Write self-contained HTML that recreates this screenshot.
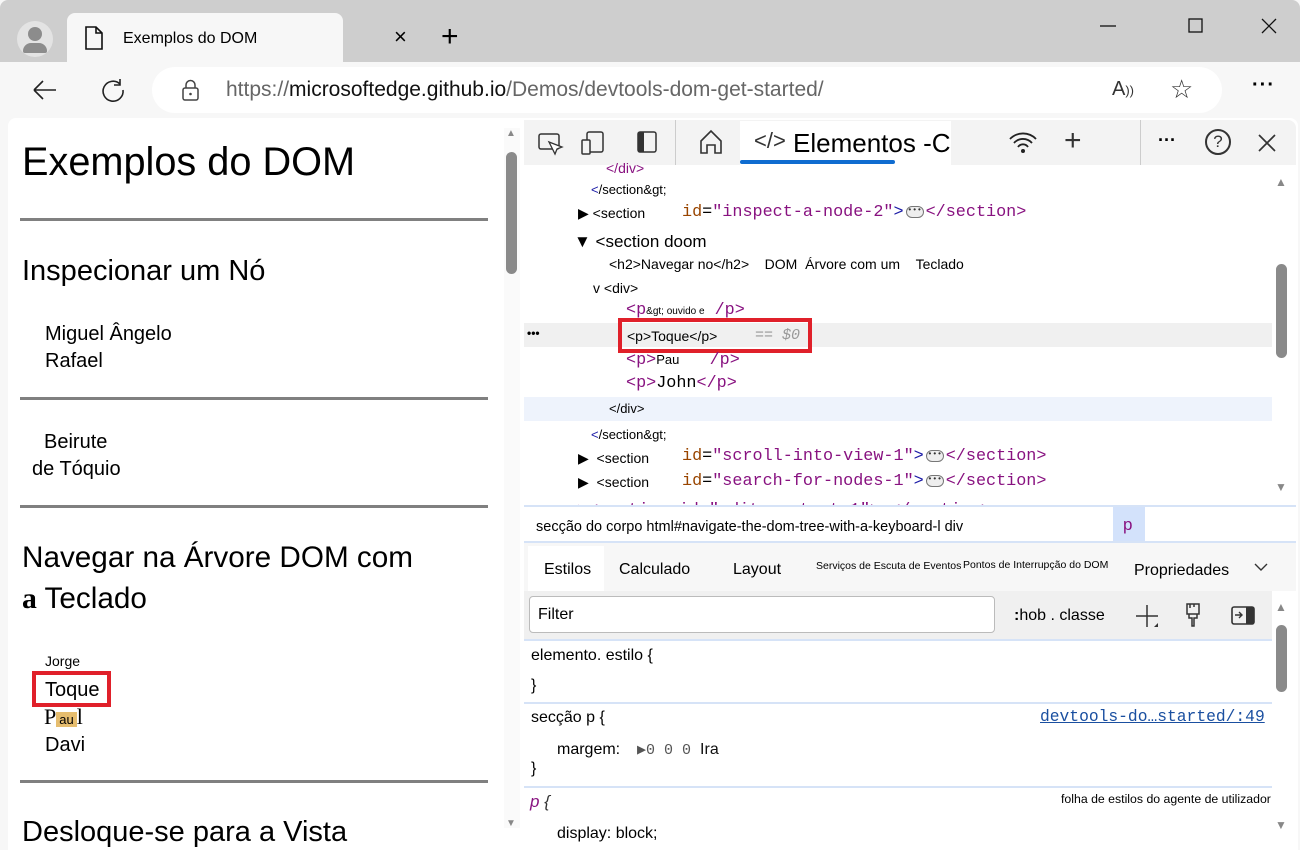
<!DOCTYPE html>
<html><head><meta charset="utf-8"><style>
*{margin:0;padding:0;box-sizing:border-box}
body{width:1300px;height:850px;background:#f7f7f7;font-family:"Liberation Sans",sans-serif;position:relative;overflow:hidden;color:#000}
.a{position:absolute;white-space:nowrap}
.m{font-family:"Liberation Mono",monospace}
.tag{color:#881280}.at{color:#994500}.av{color:#1a1aa6}
.hr{position:absolute;left:20px;width:468px;height:3px;background:#808080}
.ell{display:inline-block;width:18px;height:12px;border:1px solid #777;border-radius:6px;background:#eee;font-size:8px;line-height:8px;text-align:center;vertical-align:middle;color:#333;margin:0 2px}
</style></head><body>
<div class="a" style="left:0;top:0;width:1300px;height:62px;background:#cecece;border-radius:8px 8px 0 0"></div>
<div class="a" style="left:17px;top:21px;width:36px;height:36px;border-radius:50%;background:#e3e3e3"></div>
<div class="a" style="left:28px;top:27px;width:14px;height:14px;border-radius:50%;background:#8c8c8c"></div>
<div class="a" style="left:23px;top:43px;width:24px;height:10px;border-radius:12px 12px 3px 3px;background:#8c8c8c"></div>
<div class="a" style="left:67px;top:13px;width:276px;height:50px;background:#f7f7f7;border-radius:8px 8px 0 0"></div>
<svg class="a" style="left:84px;top:25px" width="20" height="26"><path d="M2 2h10l6 6v16H2z M12 2v6h6" fill="none" stroke="#111" stroke-width="1.6"/></svg>
<div class="a" style="left:123px;top:30px;font-size:16px">Exemplos do DOM</div>
<div class="a" style="left:394px;top:24px;font-size:22px">×</div>
<div class="a" style="left:441px;top:20px;font-size:30px;font-weight:300">+</div>
<svg class="a" style="left:1088px;top:14px" width="200" height="24"><path d="M12 12h16" stroke="#111" stroke-width="1.3"/><rect x="101" y="5" width="13" height="13" fill="none" stroke="#111" stroke-width="1.3"/><path d="M174 5l14 14M188 5l-14 14" stroke="#111" stroke-width="1.3"/></svg>
<svg class="a" style="left:30px;top:78px" width="100" height="26"><path d="M4 12h22M4 12l9-9M4 12l9 9" fill="none" stroke="#222" stroke-width="1.6"/><path d="M90 6a10 10 0 1 0 3 6M90 1v6h-6" fill="none" stroke="#222" stroke-width="1.6"/></svg>
<div class="a" style="left:152px;top:67px;width:1070px;height:46px;background:#fff;border-radius:23px"></div>
<svg class="a" style="left:181px;top:79px" width="20" height="22"><rect x="2" y="9" width="15" height="12" rx="2" fill="none" stroke="#444" stroke-width="1.5"/><path d="M5 9V6a4.5 4.5 0 0 1 9 0v3" fill="none" stroke="#444" stroke-width="1.5"/><circle cx="9.5" cy="15" r="1.3" fill="#444"/></svg>
<div class="a" style="left:226px;top:78px;font-size:21px;color:#666">https://<span style="color:#111">microsoftedge.github.io</span>/Demos/devtools-dom-get-started/</div>
<div class="a" style="left:1112px;top:78px;font-size:20px;color:#333">A<span style="font-size:13px">))</span></div>
<div class="a" style="left:1170px;top:74px;font-size:26px;color:#333">☆</div>
<div class="a" style="left:1252px;top:74px;font-size:20px;font-weight:bold;letter-spacing:1px">···</div>
<div class="a" style="left:8px;top:118px;width:514px;height:732px;background:#fff;border-radius:8px 0 0 0"></div>
<div class="a" style="left:504px;top:128px;width:16px;height:700px;background:#fafafa"></div>
<div class="a" style="left:506px;top:152px;width:11px;height:122px;background:#8a8a8a;border-radius:6px"></div>
<div class="a" style="left:506px;top:128px;font-size:10px;color:#888">▲</div>
<div class="a" style="left:506px;top:818px;font-size:10px;color:#888">▼</div>
<div class="a" style="left:22px;top:140px;font-size:39.7px">Exemplos do DOM</div>
<div class="hr" style="top:218px"></div>
<div class="a" style="left:22px;top:255px;font-size:29px">Inspecionar um Nó</div>
<div class="a" style="left:45px;top:323px;font-size:20px">Miguel Ângelo</div>
<div class="a" style="left:45px;top:350px;font-size:20px">Rafael</div>
<div class="hr" style="top:397px"></div>
<div class="a" style="left:44px;top:431px;font-size:20px">Beirute</div>
<div class="a" style="left:32px;top:458px;font-size:20px">de Tóquio</div>
<div class="hr" style="top:505px"></div>
<div class="a" style="left:22px;top:541px;font-size:29.7px">Navegar na Árvore DOM com</div>
<div class="a" style="left:22px;top:582px;font-size:29.7px"><b style="font-family:'Liberation Serif',serif">a</b> Teclado</div>
<div class="a" style="left:45px;top:653px;font-size:14px">Jorge</div>
<div class="a" style="left:32px;top:671px;width:79px;height:36px;border:4px solid #e0202a"></div>
<div class="a" style="left:45px;top:679px;font-size:20px">Toque</div>
<div class="a" style="left:44px;top:704px;font-size:22px;font-family:'Liberation Serif',serif">P<span style="font-family:'Liberation Sans';font-size:13px;background:#e6bd6e;padding:0 3px">au</span>l</div>
<div class="a" style="left:45px;top:734px;font-size:20px">Davi</div>
<div class="hr" style="top:780px"></div>
<div class="a" style="left:22px;top:816px;font-size:29px">Desloque-se para a Vista</div>
<div class="a" style="left:522px;top:118px;width:776px;height:732px;background:#fff;border-radius:0 8px 0 0"></div>
<div class="a" style="left:524px;top:120px;width:772px;height:45px;background:#f3f3f3;border-radius:0 8px 0 0"></div>
<svg class="a" style="left:535px;top:128px" width="130" height="30"><rect x="4" y="6" width="20" height="15" rx="2" fill="none" stroke="#333" stroke-width="1.5"/><path d="M14 14l6 12 2-5 5-2z" fill="#fff" stroke="#333" stroke-width="1.3"/><rect x="52" y="4" width="16" height="20" rx="2" fill="none" stroke="#333" stroke-width="1.5"/><rect x="47" y="12" width="8" height="14" rx="1" fill="#f3f3f3" stroke="#333" stroke-width="1.5"/><rect x="103" y="4" width="18" height="20" rx="2" fill="none" stroke="#333" stroke-width="1.5"/><rect x="103" y="4" width="6" height="20" fill="#333"/></svg>
<div class="a" style="left:675px;top:120px;width:1px;height:45px;background:#ccc"></div>
<svg class="a" style="left:698px;top:128px" width="26" height="28"><path d="M3 13L13 3l10 10v12h-6v-8h-8v8H3z" fill="none" stroke="#333" stroke-width="1.6"/></svg>
<div class="a" style="left:740px;top:121px;width:211px;height:44px;background:#fff"></div>
<div class="a" style="left:740px;top:160px;width:155px;height:4px;background:#0f6cd0;border-radius:2px"></div>
<div class="a" style="left:754px;top:128px;font-size:22px;color:#333">&lt;/&gt;</div>
<div class="a" style="left:793px;top:128px;font-size:26px">Elementos -C</div>
<svg class="a" style="left:1008px;top:131px" width="30" height="24"><path d="M2 8a18 18 0 0 1 26 0M6 12a12 12 0 0 1 18 0M10 16a6 6 0 0 1 10 0" fill="none" stroke="#222" stroke-width="1.8"/><circle cx="15" cy="20" r="2" fill="#222"/></svg>
<div class="a" style="left:1064px;top:124px;font-size:30px;font-weight:300;color:#333">+</div>
<div class="a" style="left:1140px;top:120px;width:1px;height:45px;background:#ccc"></div>
<div class="a" style="left:1158px;top:130px;font-size:18px;font-weight:bold">···</div>
<div class="a" style="left:1205px;top:129px;width:26px;height:26px;border:2px solid #333;border-radius:50%;font-size:17px;text-align:center;line-height:22px;color:#333">?</div>
<svg class="a" style="left:1257px;top:133px" width="20" height="20"><path d="M2 2l16 16M18 2L2 18" stroke="#333" stroke-width="1.7"/></svg>
<div class="a" style="left:524px;top:323px;width:748px;height:24px;background:#f0f0f0"></div>
<div class="a" style="left:524px;top:397px;width:748px;height:24px;background:#eef3fc"></div>
<div class="a" style="left:606px;top:160px;font-size:14px;color:#881280">&lt;/div&gt;</div>
<div class="a" style="left:591px;top:182px;font-size:13px"><span class="av">&lt;</span>/section&amp;gt;</div>
<div class="a" style="left:578px;top:205px;font-size:14px">▶ <span style="font-size:14px">&lt;section</span></div>
<div class="a m" style="left:682px;top:203px;font-size:16.8px"><span class="at">id</span>=<span class="tag">"inspect-a-node-2"</span><span class="av">&gt;</span><span class="ell">•••</span><span class="tag">&lt;/section&gt;</span></div>
<div class="a" style="left:574px;top:232px;font-size:17px">▼ &lt;section doom</div>
<div class="a" style="left:609px;top:256px;font-size:14px">&lt;h2&gt;Navegar no&lt;/h2&gt; &nbsp; &nbsp;DOM &nbsp;Árvore com um &nbsp; &nbsp;Teclado</div>
<div class="a" style="left:593px;top:280px;font-size:14px">v &lt;div&gt;</div>
<div class="a m" style="left:626px;top:301px;font-size:16.8px"><span class="tag">&lt;p</span><span style="font-family:'Liberation Sans';font-size:10px">&amp;gt; ouvido e</span> <span class="tag">/p&gt;</span></div>
<div class="a" style="left:527px;top:326px;font-size:12px;font-weight:bold">•••</div>
<div class="a" style="left:618px;top:318px;width:194px;height:35px;border:4px solid #e0202a"></div>
<div class="a" style="left:627px;top:328px;font-size:14px">&lt;p&gt;Toque&lt;/p&gt;</div>
<div class="a m" style="left:755px;top:327px;font-size:15px;color:#999;font-style:italic">== $0</div>
<div class="a m" style="left:626px;top:351px;font-size:16.8px"><span class="tag">&lt;p&gt;</span><span style="font-family:'Liberation Sans';font-size:13px">Pau</span> &nbsp; <span class="tag">/p&gt;</span></div>
<div class="a m" style="left:626px;top:374px;font-size:16.8px"><span class="tag">&lt;p&gt;</span>John<span class="tag">&lt;/p&gt;</span></div>
<div class="a" style="left:609px;top:401px;font-size:13px">&lt;/div&gt;</div>
<div class="a" style="left:591px;top:427px;font-size:13px"><span class="av">&lt;</span>/section&amp;gt;</div>
<div class="a" style="left:578px;top:450px;font-size:14px">▶ &nbsp;&lt;section</div>
<div class="a m" style="left:682px;top:447px;font-size:16.8px"><span class="at">id</span>=<span class="tag">"scroll-into-view-1"</span><span class="av">&gt;</span><span class="ell">•••</span><span class="tag">&lt;/section&gt;</span></div>
<div class="a" style="left:578px;top:474px;font-size:14px">▶ &nbsp;&lt;section</div>
<div class="a m" style="left:682px;top:472px;font-size:16.8px"><span class="at">id</span>=<span class="tag">"search-for-nodes-1"</span><span class="av">&gt;</span><span class="ell">•••</span><span class="tag">&lt;/section&gt;</span></div>
<div class="a" style="left:524px;top:493px;width:748px;height:12px;overflow:hidden"><div class="m tag" style="position:absolute;left:54px;top:5px;font-size:16.8px">▶&lt;section id="edit-content-1"&gt; &lt;/section&gt;</div></div>
<div class="a" style="left:1275px;top:175px;font-size:12px;color:#888">▲</div>
<div class="a" style="left:1276px;top:264px;width:11px;height:94px;background:#8a8a8a;border-radius:6px"></div>
<div class="a" style="left:1275px;top:480px;font-size:12px;color:#888">▼</div>
<div class="a" style="left:524px;top:505px;width:772px;height:2px;background:#d6e3f7"></div>
<div class="a" style="left:536px;top:519px;font-size:14.5px">secção do corpo html#navigate-the-dom-tree-with-a-keyboard-l div</div>
<div class="a" style="left:1113px;top:507px;width:32px;height:35px;background:#d3e2fb"></div>
<div class="a" style="left:1123px;top:515px;font-size:17px;color:#881280">p</div>
<div class="a" style="left:524px;top:541px;width:772px;height:2px;background:#d6e3f7"></div>
<div class="a" style="left:524px;top:543px;width:772px;height:48px;background:#f7f7f7"></div>
<div class="a" style="left:528px;top:546px;width:76px;height:45px;background:#fff"></div>
<div class="a" style="left:544px;top:561px;font-size:16px">Estilos</div>
<div class="a" style="left:619px;top:561px;font-size:16px">Calculado</div>
<div class="a" style="left:733px;top:561px;font-size:16px">Layout</div>
<div class="a" style="left:816px;top:560px;font-size:10.5px">Serviços de Escuta de Eventos</div>
<div class="a" style="left:963px;top:559px;font-size:10.5px">Pontos de Interrupção do DOM</div>
<div class="a" style="left:1134px;top:562px;font-size:16px">Propriedades</div>
<svg class="a" style="left:1254px;top:562px" width="14" height="10"><path d="M1 2l6 6 6-6" fill="none" stroke="#333" stroke-width="1.4"/></svg>
<div class="a" style="left:524px;top:591px;width:748px;height:48px;background:#f0f0f0"></div>
<div class="a" style="left:529px;top:596px;width:466px;height:37px;background:#fff;border:1px solid #bbb;border-radius:4px"></div>
<div class="a" style="left:538px;top:606px;font-size:16px">Filter</div>
<div class="a" style="left:1014px;top:607px;font-size:16px"><b>:</b>hob . classe</div>
<svg class="a" style="left:1134px;top:602px" width="130" height="30"><path d="M13 3v22M2 14h22" stroke="#333" stroke-width="1.5"/><path d="M20 25l4-4v4z" fill="#333"/><path d="M53 2h12v10H53zM56 2v4M60 2v3M55 12v4h3v8h2v-8h3v-4" fill="none" stroke="#333" stroke-width="1.5"/><rect x="98" y="5" width="22" height="17" rx="2" fill="none" stroke="#333" stroke-width="1.6"/><rect x="112" y="5" width="8" height="17" fill="#333"/><path d="M101 13h7M105 10l3 3-3 3" fill="none" stroke="#333" stroke-width="1.4"/></svg>
<div class="a" style="left:524px;top:639px;width:748px;height:2px;background:#d6e3f7"></div>
<div class="a" style="left:531px;top:647px;font-size:16px">elemento. estilo {</div>
<div class="a" style="left:531px;top:677px;font-size:16px">}</div>
<div class="a" style="left:524px;top:702px;width:748px;height:2px;background:#d6e3f7"></div>
<div class="a" style="left:531px;top:709px;font-size:16px">secção p {</div>
<div class="a m" style="left:1040px;top:707px;font-size:16.3px;color:#1a4fa0;text-decoration:underline">devtools-do…started/:49</div>
<div class="a" style="left:557px;top:741px;font-size:16px">margem:</div>
<div class="a m" style="left:637px;top:740px;font-size:15px;color:#555">▶0 0 0 <span style="font-family:'Liberation Sans';font-size:16px;color:#111">Ira</span></div>
<div class="a" style="left:531px;top:760px;font-size:16px">}</div>
<div class="a" style="left:524px;top:786px;width:748px;height:2px;background:#d6e3f7"></div>
<div class="a" style="left:530px;top:792px;font-size:17px;font-style:italic;color:#881280">p <span style="color:#333">{</span></div>
<div class="a" style="left:1061px;top:792px;font-size:12.3px">folha de estilos do agente de utilizador</div>
<div class="a" style="left:557px;top:825px;font-size:16px">display: block;</div>
<div class="a" style="left:1275px;top:600px;font-size:12px;color:#888">▲</div>
<div class="a" style="left:1276px;top:625px;width:11px;height:67px;background:#8a8a8a;border-radius:6px"></div>
<div class="a" style="left:1275px;top:818px;font-size:12px;color:#888">▼</div>
</body></html>
